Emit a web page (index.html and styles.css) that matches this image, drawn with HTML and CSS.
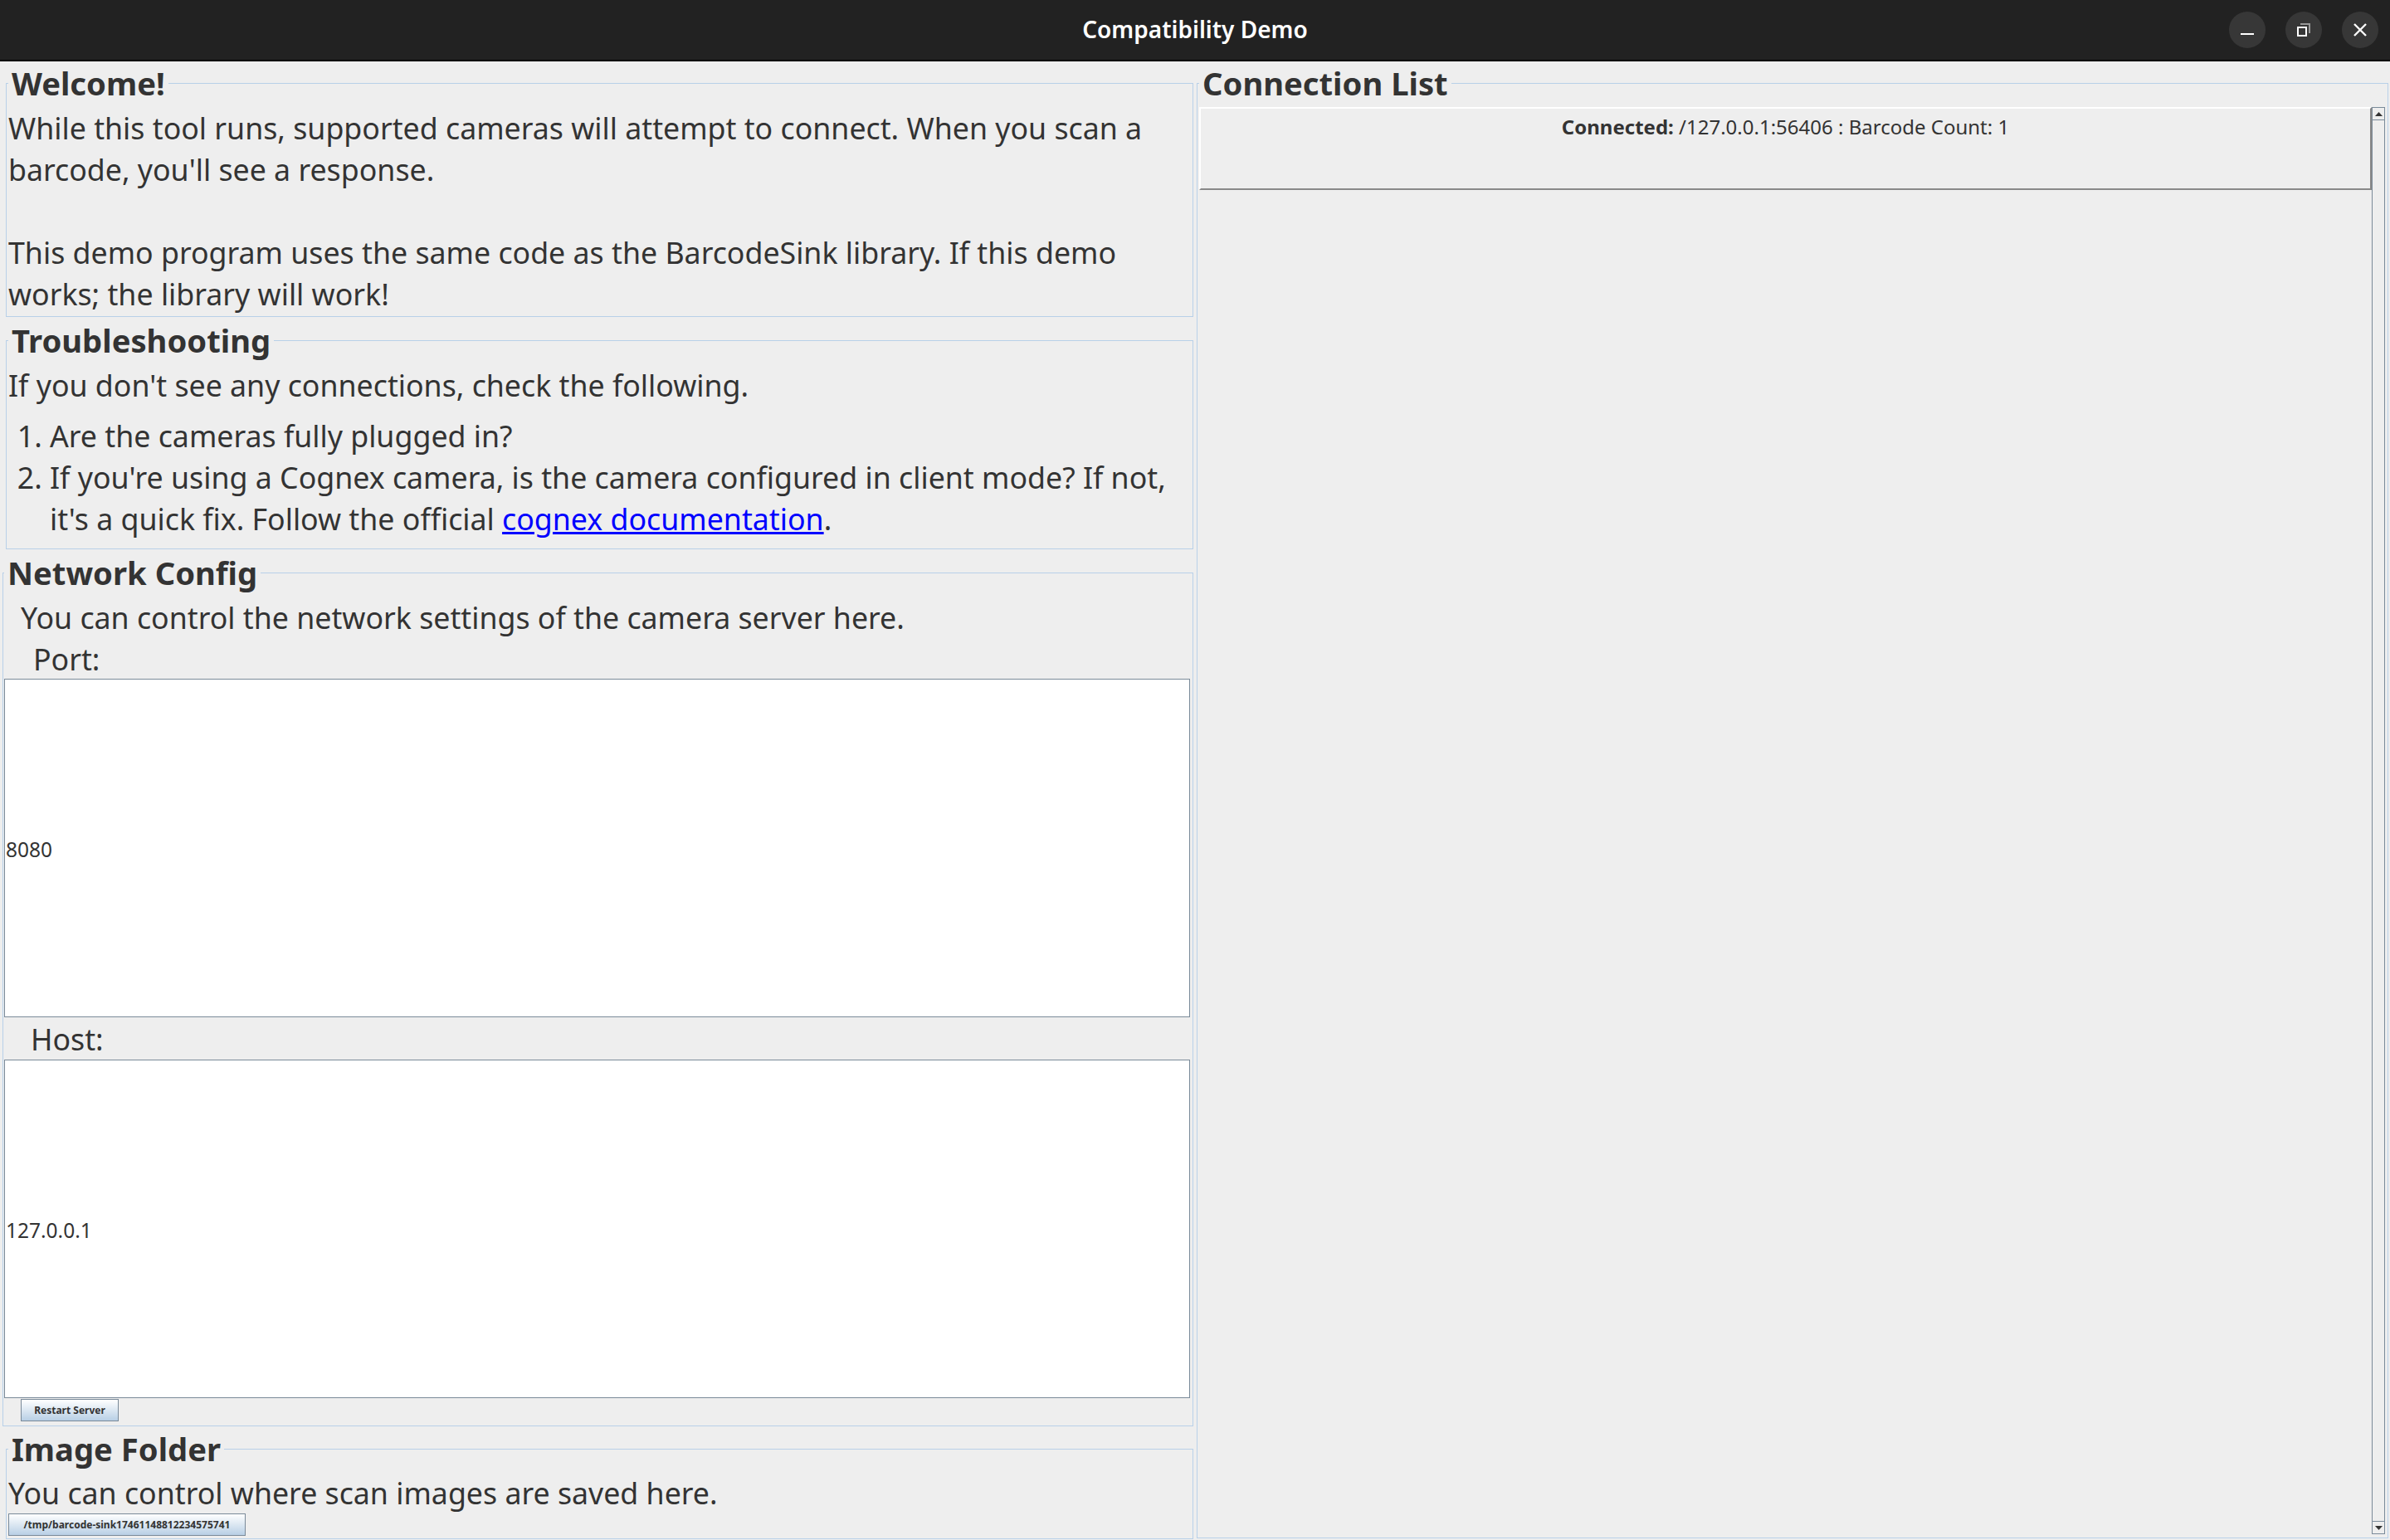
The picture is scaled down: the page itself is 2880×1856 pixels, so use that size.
FILE: index.html
```html
<!DOCTYPE html>
<html lang="en">
<head>
<meta charset="utf-8">
<title>Compatibility Demo</title>
<link rel="stylesheet" href="styles.css">
</head>
<body>
<div class="window">
  <header class="titlebar">
    <div class="title">Compatibility Demo</div>
    <div class="controls">
      <button class="ctl" aria-label="Minimize"><svg width="24" height="24" viewBox="0 0 24 24"><rect x="4" y="16" width="16" height="2" fill="#fff"/></svg></button>
      <button class="ctl" aria-label="Restore"><svg width="24" height="24" viewBox="0 0 24 24"><path d="M8 5H19V16" fill="none" stroke="#999" stroke-width="2"/><rect x="5" y="9" width="10" height="10" fill="#373737" stroke="#fff" stroke-width="2"/></svg></button>
      <button class="ctl" aria-label="Close"><svg width="24" height="24" viewBox="0 0 24 24"><path d="M5 5L19 19M19 5L5 19" fill="none" stroke="#fff" stroke-width="2.400"/></svg></button>
    </div>
  </header>
  <main class="main">
    <section class="left">
      <fieldset class="box welcome">
        <legend class="legend">Welcome!</legend>
        <p class="text">While this tool runs, supported cameras will attempt to connect. When you scan a<br>barcode, you'll see a response.<br><br>This demo program uses the same code as the BarcodeSink library. If this demo<br>works; the library will work!</p>
      </fieldset>
      <fieldset class="box trouble">
        <legend class="legend">Troubleshooting</legend>
        <p class="text">If you don't see any connections, check the following.</p>
        <ol class="steps">
          <li>Are the cameras fully plugged in?</li>
          <li>If you're using a Cognex camera, is the camera configured in client mode? If not,<br>it's a quick fix. Follow the official <a class="link" href="#">cognex documentation</a>.</li>
        </ol>
      </fieldset>
      <fieldset class="box network">
        <legend class="legend">Network Config</legend>
        <p class="text intro">You can control the network settings of the camera server here.</p>
        <div class="label port">Port:</div>
        <div class="field">8080</div>
        <div class="label host">Host:</div>
        <div class="field">127.0.0.1</div>
        <button class="btn restart">Restart Server</button>
      </fieldset>
      <fieldset class="box images">
        <legend class="legend">Image Folder</legend>
        <p class="text">You can control where scan images are saved here.</p>
        <button class="btn folder">/tmp/barcode-sink17461148812234575741</button>
      </fieldset>
    </section>
    <fieldset class="box right">
      <legend class="legend">Connection List</legend>
      <div class="scrollpane">
        <div class="list">
          <div class="row"><b>Connected:</b> /127.0.0.1:56406 : Barcode Count: 1</div>
        </div>
        <div class="scrollbar">
          <div class="arrow up"><svg width="9" height="5" viewBox="0 0 9 5"><path d="M4.500 0L9 5H0Z" fill="#333"/></svg></div>
          <div class="track"></div>
          <div class="arrow down"><svg width="9" height="5" viewBox="0 0 9 5"><path d="M0 0H9L4.500 5Z" fill="#333"/></svg></div>
        </div>
      </div>
    </fieldset>
  </main>
</div>
</body>
</html>
```
FILE: styles.css
```css
* { box-sizing: border-box; }
html, body { margin: 0; padding: 0; height: 100%; overflow: hidden; }
body { font-family: "Noto Sans", sans-serif; color: #333; background: #eee; }
.window { width: 2880px; height: 1856px; display: flex; flex-direction: column; }

.titlebar { height: 74px; flex: none; background: #222; border-bottom: 2px solid #000; display: flex; align-items: center; justify-content: center; position: relative; }
.title { color: #fff; font-size: 28px; font-weight: 600; line-height: 70px; height: 72px; }
.controls { position: absolute; top: 14px; right: 14px; display: flex; gap: 24px; }
.ctl { width: 44px; height: 44px; padding: 0; border: 0; border-radius: 50%; background: #373737; display: flex; align-items: center; justify-content: center; }
.ctl svg { display: block; }

.main { flex: 1; display: flex; padding-top: 1px; min-height: 0; }
.left { width: 1440px; flex: none; display: flex; flex-direction: column; }

.box { margin: 0 0 0 7px; padding: 0; border: 1px solid #b8d0e8; min-width: 0; }
.left .box { width: 1431px; }
.legend { margin-left: 0; padding: 0 4px; font-size: 38.200px; font-weight: 700; line-height: 50px; height: 50px; }
.text { margin: 0; font-size: 35.720px; line-height: 50px; white-space: nowrap; }

.welcome { padding: 4px 0 0 2px; height: 307px; }
.trouble { margin-top: 3px; padding: 4px 0 0 2px; height: 277px; }
.steps { margin: 11px 0 0; padding: 0 0 0 50px; font-size: 35.720px; line-height: 50px; white-space: nowrap; }
.link { color: #00f; text-decoration: underline; }

.network { margin-top: 3px; margin-left: 3px; padding: 4px 0 0 1px; height: 1054px; }
.left .network { width: 1435px; }
.intro { padding-left: 20px; }
.label { font-size: 35.720px; line-height: 48px; white-space: nowrap; }
.port { height: 49px; padding-left: 35px; line-height: 50px; }
.host { height: 51px; padding-left: 32px; line-height: 52px; }
.field { height: 408px; margin: 0 3px 0 0; background: #fff; border: 1px solid #7a8a99; display: flex; align-items: center; padding: 2px 0 0 1px; font-size: 24.500px; }
.btn { display: block; padding: 0; border: 1px solid #7a8a99; background: linear-gradient(#fff, #b8cfe5); color: #333; font-family: "Noto Sans", sans-serif; font-weight: 700; text-align: center; white-space: nowrap; }
.restart { width: 118px; height: 27px; margin: 1px 0 0 20px; font-size: 12px; }

.images { margin-top: 2px; padding: 3px 0 0 2px; height: 134px; }
.folder { width: 286px; height: 27px; margin-left: 0; font-size: 12px; }

.right { flex: 1; margin-left: 2px; margin-right: 2px; padding: 4px 0 0 2px; height: 1779px; }
.scrollpane { display: flex; align-items: stretch; height: 1720px; margin-right: 3px; }
.list { flex: 1; min-width: 0; }
.row { height: 100px; border: solid; border-color: #fff #888 #888 #fff; border-width: 2px; text-align: center; font-size: 24px; line-height: 36px; padding-top: 4px; }
.scrollbar { width: 16px; flex: none; display: flex; flex-direction: column; border: solid #7a8a99; border-width: 0 1px; background: #eee; }
.arrow { height: 16px; flex: none; display: flex; align-items: center; justify-content: center; background: #eee; }
.arrow svg { display: block; }
.arrow.up { border-bottom: 1px solid #7a8a99; border-top: 1px solid #7a8a99; }
.arrow.down { border-top: 1px solid #7a8a99; border-bottom: 1px solid #7a8a99; }
.track { flex: 1; }
```
